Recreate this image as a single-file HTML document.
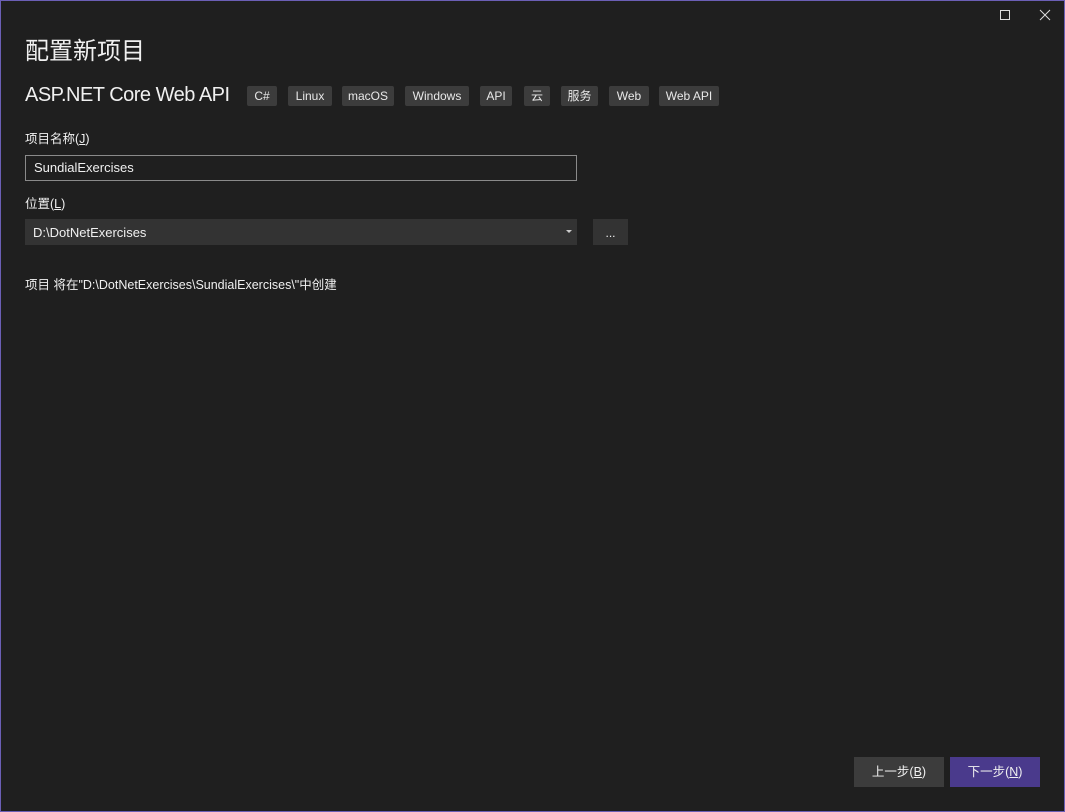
<html><head><style>
body{margin:0;width:1065px;height:812px;background:#1f1f1f;font-family:"Liberation Sans","Noto Sans CJK SC",sans-serif;color:#f0f0f0;overflow:hidden}
.win{position:absolute;left:0;top:0;width:1063px;height:810px;border:1px solid #6b5fb5;}
.a{position:absolute;white-space:nowrap}
.tag{position:absolute;top:86px;height:20px;background:#3c3c3c;border-radius:2px;font-size:12px;line-height:20px;text-align:center;color:#e8e8e8}
.lbl{font-size:12.5px}
</style></head><body><div class="win"></div>
<svg class="a" style="left:999px;top:9px" width="12" height="12"><rect x="1.5" y="1.5" width="9" height="9" fill="none" stroke="#ddd" stroke-width="1"/></svg>
<svg class="a" style="left:1039px;top:9px" width="12" height="12"><path d="M1 1L11 11M11 1L1 11" stroke="#ddd" stroke-width="1"/></svg>
<div class="a" style="left:25px;top:31px;font-size:24px">配置新项目</div>
<div class="a" style="left:25px;top:84px;font-size:20px;letter-spacing:-0.5px">ASP.NET Core Web API</div>
<div class="tag" style="left:247px;width:30px">C#</div>
<div class="tag" style="left:288px;width:44px">Linux</div>
<div class="tag" style="left:342px;width:52px">macOS</div>
<div class="tag" style="left:405px;width:64px">Windows</div>
<div class="tag" style="left:480px;width:32px">API</div>
<div class="tag" style="left:524px;width:26px">云</div>
<div class="tag" style="left:561px;width:37px">服务</div>
<div class="tag" style="left:609px;width:40px">Web</div>
<div class="tag" style="left:659px;width:60px">Web API</div>
<div class="a lbl" style="left:25px;top:128px">项目名称(<u>J</u>)</div>
<div class="a" style="left:25px;top:155px;width:550px;height:24px;border:1px solid #8a8a8a;font-size:13px;line-height:24px;text-indent:8px">SundialExercises</div>
<div class="a lbl" style="left:25px;top:193px">位置(<u>L</u>)</div>
<div class="a" style="left:25px;top:219px;width:552px;height:26px;background:#333;font-size:13px;line-height:27px;text-indent:8px">D:\DotNetExercises</div>
<div class="a" style="left:566px;top:230px;width:0;height:0;border-left:3px solid transparent;border-right:3px solid transparent;border-top:3px solid #ccc"></div>
<div class="a" style="left:593px;top:219px;width:35px;height:26px;background:#333;font-size:12px;line-height:28px;text-align:center">...</div>
<div class="a lbl" style="left:25px;top:274px">项目 将在"D:\DotNetExercises\SundialExercises\"中创建</div>
<div class="a" style="left:854px;top:757px;width:90px;height:30px;background:#3c3c3c;font-size:12.5px;line-height:30px;text-align:center">上一步(<u>B</u>)</div>
<div class="a" style="left:950px;top:757px;width:90px;height:30px;background:#4a3a8c;font-size:12.5px;line-height:30px;text-align:center">下一步(<u>N</u>)</div>
</body></html>
